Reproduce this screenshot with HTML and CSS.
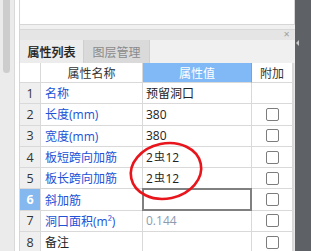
FILE: index.html
```html
<!DOCTYPE html>
<html lang="zh-CN">
<head>
<meta charset="utf-8">
<title>属性列表</title>
<link rel="stylesheet" href="styles.css">
</head>
<body>
<div class="app">
  <div class="left-strip"><div class="thumb"></div></div>
  <div class="gutter"></div>
  <div class="panel">
    <div class="top"></div>
    <div class="gap"></div>
    <div class="titlebar"><span class="close">✕</span></div>
    <div class="tabs">
      <div class="tab active">属性列表</div>
      <div class="tab">图层管理</div>
    </div>
    <div class="table-wrap">
      <div class="grid">
        <div class="c hnum"></div>
        <div class="c hname">属性名称</div>
        <div class="c hval">属性值</div>
        <div class="c hext">附加</div>

        <div class="c num">1</div>
        <div class="c name">名称</div>
        <div class="c val">预留洞口</div>
        <div class="c ext"></div>

        <div class="c num">2</div>
        <div class="c name">长度(mm)</div>
        <div class="c val">380</div>
        <div class="c ext"><span class="cb"></span></div>

        <div class="c num">3</div>
        <div class="c name">宽度(mm)</div>
        <div class="c val">380</div>
        <div class="c ext"><span class="cb"></span></div>

        <div class="c num">4</div>
        <div class="c name">板短跨向加筋</div>
        <div class="c val">2<span class="rebar">虫</span>12</div>
        <div class="c ext"><span class="cb"></span></div>

        <div class="c num">5</div>
        <div class="c name">板长跨向加筋</div>
        <div class="c val">2<span class="rebar">虫</span>12</div>
        <div class="c ext"><span class="cb"></span></div>

        <div class="c num sel">6</div>
        <div class="c name">斜加筋</div>
        <div class="c val editing"></div>
        <div class="c ext"><span class="cb"></span></div>

        <div class="c num">7</div>
        <div class="c name">洞口面积(m²)</div>
        <div class="c val muted">0.144</div>
        <div class="c ext"><span class="cb"></span></div>

        <div class="c num">8</div>
        <div class="c name plain">备注</div>
        <div class="c val"></div>
        <div class="c ext"><span class="cb"></span></div>
      </div>
      <div class="vscroll"></div>
    </div>
  </div>
  <div class="dark"><span class="tri"></span></div>
</div>
<svg class="mark" width="311" height="251" viewBox="0 0 311 251">
  <ellipse cx="166" cy="171" rx="35.5" ry="27.5" transform="rotate(-12 166 171)" fill="none" stroke="#e8161c" stroke-width="2.6"/>
</svg>
</body>
</html>
```
FILE: styles.css
```css
* { box-sizing: border-box; }
html, body { margin: 0; padding: 0; }
body {
  width: 311px;
  height: 251px;
  overflow: hidden;
  position: relative;
  background: #f0f0f0;
  font-family: "Open Sans", "Noto Sans CJK SC", sans-serif;
  font-size: 12px;
  color: #222;
}
.app { display: flex; height: 251px; }
.left-strip {
  width: 15px;
  background: #ebebeb;
  border-right: 1px solid #d9d9d9;
  padding-left: 3px;
}
.thumb {
  width: 7px;
  height: 73px;
  background: #cdcdcd;
  border-radius: 0 0 4px 4px;
}
.gutter { width: 4px; background: #fff; }
.panel {
  width: 276px;
  display: flex;
  flex-direction: column;
  border-left: 1px solid #d6d6d6;
  background: #f0f0f0;
}
.top {
  height: 25px;
  background: #fff;
  border-bottom: 1px solid #d6d6d6;
  border-right: 1px solid #d6d6d6;
  flex: none;
}
.gap { height: 4px; flex: none; }
.titlebar {
  height: 11px;
  flex: none;
  background: #e5e5e5;
  border-top: 1px solid #d8d8d8;
  display: flex;
  justify-content: flex-end;
  align-items: center;
  padding-right: 5px;
}
.close {
  font-family: "DejaVu Sans", sans-serif;
  font-size: 8px;
  line-height: 8px;
  color: #a0a0a0;
}
.tabs {
  height: 23px;
  flex: none;
  display: flex;
  background: #f0f0f0;
}
.tab {
  display: flex;
  align-items: center;
  justify-content: center;
  font-size: 12px;
  color: #8a8a8a;
  background: #dadada;
  border-right: 1px solid #cfcfcf;
  width: 66px;
}
.tab.active {
  width: 64px;
  background: #ececec;
  color: #222;
  font-weight: 500;
  -webkit-text-stroke: 0.2px #222;
}
.table-wrap { display: flex; flex: 1; background: #fff; }
.grid {
  display: grid;
  grid-template-columns: 21px 102px 109px 41px;
  grid-template-rows: 20px repeat(8, 21.3px);
  align-content: start;
}
.vscroll { width: 2px; background: #e6e6e6; border-left: 1px solid #d9d9d9; }
.c {
  border-right: 1px solid #d9d9d9;
  border-bottom: 1px solid #d9d9d9;
  display: flex;
  align-items: center;
  white-space: nowrap;
  overflow: hidden;
}
.hnum, .hname, .hext { background: #fff; justify-content: center; color: #333; }
.hval {
  background: #80b9f6;
  color: #fff;
  justify-content: center;
  border-right: 1px solid #6aa6e8;
}
.num {
  background: #efefef;
  justify-content: center;
  color: #333;
  font-size: 12.5px;
}
.num.sel { background: #84b8ef; color: #fff; font-weight: 700; }
.name { padding-left: 4px; color: #2152d6; }
.name.plain { color: #222; }
.val { padding-left: 3px; color: #222; }
.val.muted { color: #8c9bb0; }
.val.editing { border: 2px solid #808080; margin: -1px 0 0 -1px; }
.rebar {
  font-family: "Noto Sans CJK SC", sans-serif;
  font-size: 11px;
  margin: 0 0.5px 0 1px;
  position: relative;
  top: -1px;
}
.ext { justify-content: center; }
.cb {
  width: 13px;
  height: 13px;
  border: 1px solid #7c7c7c;
  border-radius: 2px;
  background: #fff;
}
.dark {
  width: 16px;
  background: #5e6165;
  position: relative;
}
.tri {
  position: absolute;
  left: 1px;
  top: 40px;
  width: 0;
  height: 0;
  border-top: 3px solid transparent;
  border-bottom: 3px solid transparent;
  border-right: 3px solid #c9c9c9;
}
.mark { position: absolute; left: 0; top: 0; pointer-events: none; }
```
